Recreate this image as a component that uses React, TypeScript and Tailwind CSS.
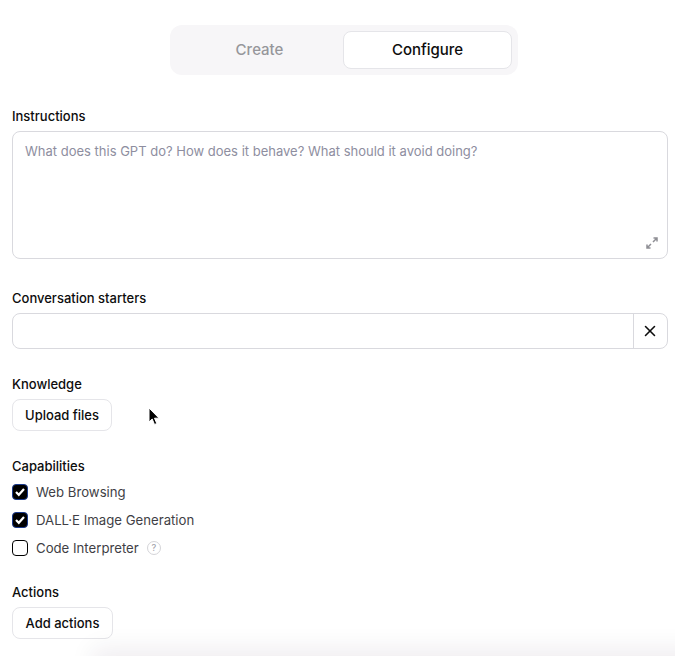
import React from "react";
import { X } from "lucide-react";

const Label: React.FC<{ children: React.ReactNode }> = ({ children }) => (
	<div className="h-5 text-[13px] leading-5 font-medium text-[#0d0d0d] mb-[5px]">{children}</div>
);

const Capability: React.FC<{ label: string; checked?: boolean; hint?: boolean }> = ({ label, checked, hint }) => (
	<div className="flex items-center h-7">
		<span
			className={`flex items-center justify-center w-4 h-4 rounded-[4px] border ${
				checked ? "bg-black border-[#1b3a8c]" : "bg-white border-black"
			}`}
		>
			{checked && (
				<svg width="12" height="12" viewBox="0 0 12 12" fill="none">
					<path d="M2 6 4.8 8.8 10 3" stroke="white" strokeWidth="2.2" />
				</svg>
			)}
		</span>
		<span className="ml-2 pt-px text-[13.2px] text-[#3f3f46]">{label}</span>
		{hint && (
			<span className="ml-2 flex items-center justify-center w-[14px] h-[14px] rounded-full border border-[#d4d4d8] text-[9px] font-medium text-[#a1a1aa]">
				?
			</span>
		)}
	</div>
);

export default function App() {
	return (
		<div
			className="relative h-[656px] overflow-hidden bg-white pl-[12px] pr-[7px] pt-[25px]"
			style={{ fontFamily: "Inter, 'Liberation Sans', sans-serif" }}
		>
			<div className="flex justify-center pl-[8px]">
				<div className="flex w-[348px] h-[50px] p-[6px] rounded-xl bg-[#f7f6f8]">
					<div className="flex-1 flex items-center justify-center text-[15px] font-medium text-[#96969b]">
						Create
					</div>
					<div className="flex-1 flex items-center justify-center text-[15px] font-medium text-[#0d0d0d] bg-white border border-[#e5e5e9] rounded-lg">
						Configure
					</div>
				</div>
			</div>

			<div className="mt-[31px]">
				<Label>Instructions</Label>
				<div className="relative h-[128px] rounded-lg border border-[#d9d9de] px-3 py-[9px] text-[13px] leading-5 text-[#8e8ea0]">
					What does this GPT do? How does it behave? What should it avoid doing?
					<svg
						className="absolute right-[9px] bottom-[9px] text-[#8e8e94]"
						width="12"
						height="12"
						viewBox="0 0 12 12"
						fill="none"
						stroke="currentColor"
						strokeWidth="1.5"
					>
						<path d="M7 5 11 1M7.5 1H11V4.5M5 7 1 11M1 7.5V11H4.5" />
					</svg>
				</div>
			</div>

			<div className="mt-[29px]">
				<Label>Conversation starters</Label>
				<div className="flex h-9 rounded-lg border border-[#d9d9de]">
					<div className="flex-1" />
					<div className="flex items-center justify-center w-[34px] pr-[1px] border-l border-[#d9d9de] text-[#0d0d0d]">
						<X size={18} strokeWidth={2.1} />
					</div>
				</div>
			</div>

			<div className="mt-[25px]">
				<Label>Knowledge</Label>
				<div className="flex items-center justify-center w-[100px] h-8 pt-[2px] rounded-lg border border-[#e5e5e9] text-[13px] font-medium text-[#0d0d0d]">
					Upload files
				</div>
			</div>

			<div className="mt-[25px]">
				<div className="h-5 text-[13px] leading-5 font-medium text-[#0d0d0d]">Capabilities</div>
				<div className="mt-[2px]">
					<Capability label="Web Browsing" checked />
					<Capability label="DALL·E Image Generation" checked />
					<Capability label="Code Interpreter" hint />
				</div>
			</div>

			<div className="mt-[20px]">
				<Label>Actions</Label>
				<div className="flex items-center justify-center w-[101px] h-8 pt-[2px] rounded-lg border border-[#e5e5e9] text-[13px] font-medium text-[#0d0d0d]">
					Add actions
				</div>
			</div>

			{/* cursor over the page */}
			<svg className="absolute left-[148px] top-[407px]" width="12" height="19" viewBox="0 0 12 19">
				<path d="M1 1V15L4.2 12 6.5 17.5 8.8 16.5 6.5 11.2H11Z" fill="black" stroke="white" strokeWidth="1" />
			</svg>

			{/* panel shadow creeping in from below */}
			<div className="absolute left-[100px] right-[-20px] top-[656px] h-5 shadow-[0_0_24px_8px_rgba(40,20,60,0.07)]" />
		</div>
	);
}
